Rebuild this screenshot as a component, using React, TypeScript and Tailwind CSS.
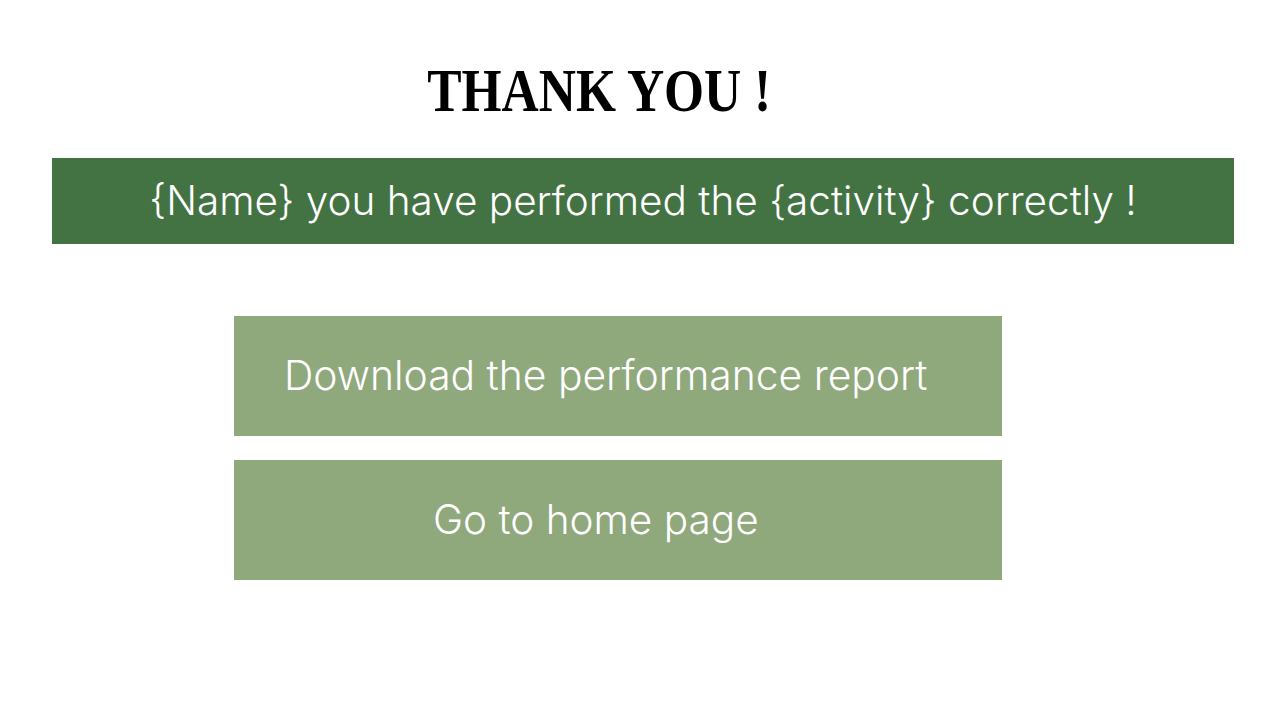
export default function App() {
  return (
    <div className="w-[1280px] h-[720px] bg-white flex flex-col font-['Inter',sans-serif]">
      {/* Heading */}
      <div className="h-[158px] flex items-start justify-center">
        <h1 className="mt-[59px] mr-[82px] text-[62px] leading-[62px] font-bold text-black font-['Liberation_Serif',serif] scale-x-[0.83] whitespace-nowrap">
          THANK YOU !
        </h1>
      </div>

      {/* Banner */}
      <div className="mx-[52px] w-[1182px] h-[86px] bg-[#437343] flex items-center justify-center">
        <p className="text-[40.5px] font-light text-white whitespace-nowrap">
          {"{Name} you have performed the {activity} correctly !"}
        </p>
      </div>

      {/* Actions */}
      <div className="mt-[72px] ml-[234px] w-[768px] flex flex-col gap-[24px]">
        <button className="h-[120px] bg-[#8fa87c] flex items-center pl-[50px] text-[40.8px] font-light text-white whitespace-nowrap">
          Download the performance report
        </button>
        <button className="h-[120px] bg-[#8fa87c] flex items-center pl-[199px] text-[40.5px] font-light text-white whitespace-nowrap">
          Go to home page
        </button>
      </div>
    </div>
  );
}
